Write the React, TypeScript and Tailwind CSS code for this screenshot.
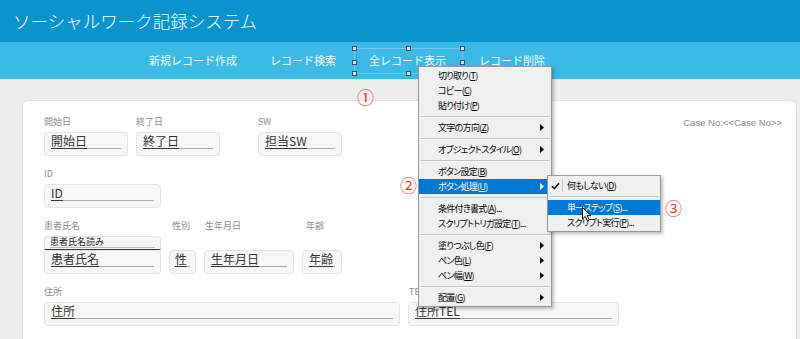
import React from "react";

type Item =
  | "sep"
  | { t: string; k: string; sub?: boolean; dots?: boolean; active?: boolean };

const MENU: Item[] = [
  { t: "切り取り", k: "T" },
  { t: "コピー", k: "C" },
  { t: "貼り付け", k: "P" },
  "sep",
  { t: "文字の方向", k: "Z", sub: true },
  "sep",
  { t: "オブジェクトスタイル", k: "O", sub: true },
  "sep",
  { t: "ボタン設定", k: "B" },
  { t: "ボタン処理", k: "U", sub: true, active: true },
  "sep",
  { t: "条件付き書式", k: "A", dots: true },
  { t: "スクリプトトリガ設定", k: "T", dots: true },
  "sep",
  { t: "塗りつぶし色", k: "F", sub: true },
  { t: "ペン色", k: "L", sub: true },
  { t: "ペン幅", k: "W", sub: true },
  "sep",
  { t: "配置", k: "G", sub: true },
];

const ROW_TEXT = "text-[9px] leading-[15px] tracking-[-0.7px] [font-feature-settings:'palt']";

function Arrow() {
  return (
    <svg width="4" height="7" viewBox="0 0 4 7" className="ml-auto">
      <path d="M0 0L4 3.5L0 7Z" fill="currentColor" />
    </svg>
  );
}

function Sep() {
  return (
    <div className="flex h-[7px] items-center px-[1px]">
      <div className="h-[2px] w-full border-y border-t-[#c4c4c4] border-b-[#f8f8f8]" />
    </div>
  );
}

function MenuRow({ item }: { item: Exclude<Item, "sep"> }) {
  return (
    <div
      className={`flex h-[15px] items-center pl-[19px] pr-[7px] ${ROW_TEXT} ${
        item.active ? "bg-[#0078d7] text-white" : "text-black"
      }`}
    >
      <span>
        {item.t}(<u>{item.k}</u>){item.dots ? "..." : ""}
      </span>
      {item.sub ? <Arrow /> : null}
    </div>
  );
}

function Label({ children, className = "" }: { children: React.ReactNode; className?: string }) {
  return (
    <div className={`mb-[4px] h-[12px] whitespace-nowrap text-[9px] leading-[12px] text-[#8c8c8c] ${className}`}>
      {children}
    </div>
  );
}

function Box({ value, className = "" }: { value: string; className?: string }) {
  return (
    <div className={`flex h-[24px] items-end rounded-[4px] border border-[#e3e3e3] bg-[#f7f7f7] pb-[6px] ${className}`}>
      <div className="mx-[6px] flex min-w-0 flex-1 border-b border-[#aaaaaa]">
        <span className="-mb-px whitespace-nowrap border-b border-[#333] text-[12px] leading-[14px] text-[#333]">
          {value}
        </span>
      </div>
    </div>
  );
}

function Handle({ className }: { className: string }) {
  return <div className={`absolute h-[5px] w-[5px] border border-[#3d4b5c] bg-[#cde9f6] ${className}`} />;
}

export default function App() {
  return (
    <div className="relative h-[339px] w-[800px] overflow-hidden bg-[#eeeeee] font-['Noto_Sans_CJK_JP','Noto_Sans',sans-serif]">
      <header className="flex h-[42px] items-center bg-[#0a93cd] pl-[13px] text-[17.5px] font-light leading-none text-white">
        ソーシャルワーク記録システム
      </header>

      <nav className="flex h-[37px] items-center gap-[33px] bg-[#3cb9e6] pl-[149px] text-[11px] text-[#f2fbff]">
        <span>新規レコード作成</span>
        <span>レコード検索</span>
        <span>全レコード表示</span>
        <span>レコード削除</span>
      </nav>

      <main className="h-[260px] border-t border-[#e4e4e4] pl-[22px] pr-[3px] pt-[20px]">
        <div className="h-[300px] rounded-[6px] border border-[#e2e2e2] bg-white pl-[21px] pr-[14px] pt-[15px]">
          <div className="flex items-start gap-[8px]">
            <div className="w-[84px]">
              <Label>開始日</Label>
              <Box value="開始日" />
            </div>
            <div className="w-[84px]">
              <Label>終了日</Label>
              <Box value="終了日" />
            </div>
            <div className="ml-[30px] w-[84px]">
              <Label>SW</Label>
              <Box value="担当SW" />
            </div>
            <div className="ml-auto mt-[1px] font-['Liberation_Sans',sans-serif] text-[9.5px] leading-[12px] text-[#8a8a8a]">
              Case No:&lt;&lt;Case No&gt;&gt;
            </div>
          </div>

          <div className="mt-[12px] w-[117px]">
            <Label>ID</Label>
            <Box value="ID" />
          </div>

          <div className="mt-[12px] flex items-start gap-[8px]">
            <div className="w-[117px]">
              <Label>患者氏名</Label>
              <div className="flex h-[14px] items-end rounded-t-[4px] border border-b-[1.5px] border-[#e3e3e3] border-b-[#333] bg-[#f7f7f7] pb-[1px]">
                <div className="mx-[5px] flex flex-1 border-b border-[#bbbbbb]">
                  <span className="whitespace-nowrap text-[9px] leading-[10px] text-[#222]">患者氏名読み</span>
                </div>
              </div>
              <Box value="患者氏名" />
            </div>
            <div className="w-[27px]">
              <Label className="pl-[3px]">性別</Label>
              <div className="h-[14px]" />
              <Box value="性" className="[&>div]:mx-[5px]" />
            </div>
            <div className="w-[90px]">
              <Label className="pl-[1px]">生年月日</Label>
              <div className="h-[14px]" />
              <Box value="生年月日" />
            </div>
            <div className="w-[40px]">
              <Label className="pl-[4px]">年齢</Label>
              <div className="h-[14px]" />
              <Box value="年齢" />
            </div>
          </div>

          <div className="mt-[12px] flex items-start gap-[8px]">
            <div className="w-[356px]">
              <Label>住所</Label>
              <Box value="住所" />
            </div>
            <div className="w-[211px]">
              <Label className="pl-[1px]">TEL</Label>
              <Box value="住所TEL" />
            </div>
          </div>
        </div>
      </main>

      {/* layout-mode selection around the nav button */}
      <div className="absolute left-[354px] top-[48px] h-[26px] w-[109px] border border-[#78c6ec]">
        <Handle className="-left-[3px] -top-[3px]" />
        <Handle className="left-[51px] -top-[3px]" />
        <Handle className="-right-[3px] -top-[3px]" />
        <Handle className="-left-[3px] top-[11px]" />
        <Handle className="-right-[3px] top-[11px]" />
        <Handle className="-bottom-[3px] -left-[3px]" />
        <Handle className="-bottom-[3px] left-[51px]" />
        <Handle className="-bottom-[3px] -right-[3px]" />
      </div>

      {/* context menu */}
      <div className="absolute left-[418px] top-[66px] h-[241px] w-[134px] border border-[#979797] bg-[#f0f0f0] py-[1px] shadow-[2px_2px_3px_rgba(0,0,0,0.25)]">
        {MENU.map((item, i) => (item === "sep" ? <Sep key={i} /> : <MenuRow key={i} item={item} />))}
      </div>

      {/* sub menu */}
      <div className="absolute left-[547px] top-[175px] h-[57px] w-[114px] border border-[#979797] bg-[#f0f0f0] pb-[1px] pt-[2px] shadow-[2px_2px_3px_rgba(0,0,0,0.25)]">
        <div className={`relative flex h-[15px] items-center pl-[19px] text-black ${ROW_TEXT}`}>
          <div className="absolute left-[1px] top-[1px] flex h-[13px] w-[14px] items-center justify-center border-r border-[#c8c8c8]">
            <svg width="9" height="8" viewBox="0 0 9 8">
              <path d="M1 4.2L3.4 6.6L8 1.2" fill="none" stroke="#111" strokeWidth="1.6" />
            </svg>
          </div>
          <span>
            何もしない(<u>D</u>)
          </span>
        </div>
        <Sep />
        <div className={`flex h-[15px] items-center bg-[#0078d7] pl-[19px] text-white ${ROW_TEXT}`}>
          <span>
            単一ステップ(<u>S</u>)...
          </span>
        </div>
        <div className={`flex h-[15px] items-center pl-[19px] text-black ${ROW_TEXT}`}>
          <span>
            スクリプト実行(<u>P</u>)...
          </span>
        </div>
      </div>

      {/* mouse pointer */}
      <svg className="absolute left-[582px] top-[207px]" width="10" height="15" viewBox="0 0 10 15">
        <path d="M0.5 0.5L0.5 12L3.3 9.4L5.4 14L7.3 13.1L5.3 8.6L9 8.6Z" fill="#fff" stroke="#000" strokeWidth="1" strokeLinejoin="round" />
      </svg>

      {/* annotation numbers */}
      <span className="absolute left-[357px] top-[88px] text-[17px] leading-[17px] text-[#e8382c]">①</span>
      <span className="absolute left-[400px] top-[176px] text-[17px] leading-[17px] text-[#e8382c]">②</span>
      <span className="absolute left-[665px] top-[199px] text-[17px] leading-[17px] text-[#e8382c]">③</span>
    </div>
  );
}
